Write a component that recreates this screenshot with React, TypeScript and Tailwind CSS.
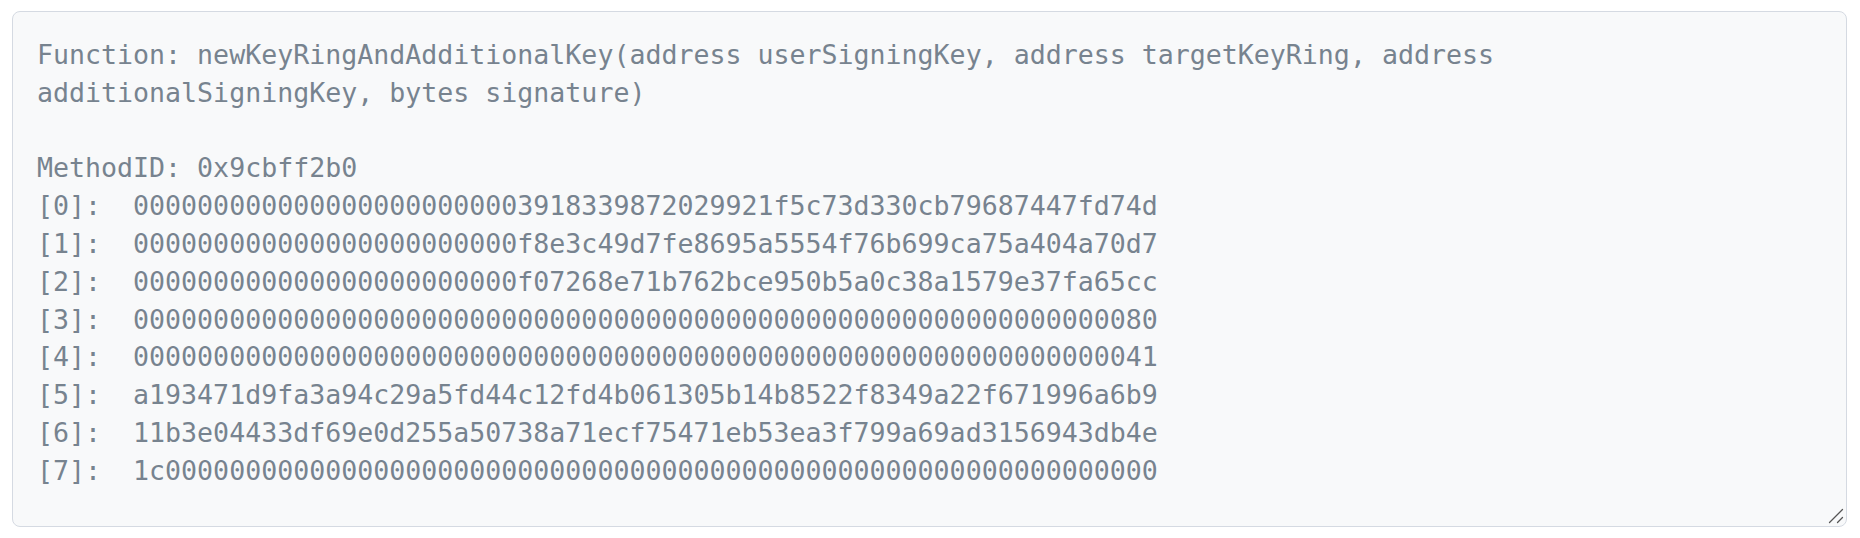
const inputData = [
  "Function: newKeyRingAndAdditionalKey(address userSigningKey, address targetKeyRing, address",
  "additionalSigningKey, bytes signature)",
  "",
  "MethodID: 0x9cbff2b0",
  "[0]:  0000000000000000000000003918339872029921f5c73d330cb79687447fd74d",
  "[1]:  000000000000000000000000f8e3c49d7fe8695a5554f76b699ca75a404a70d7",
  "[2]:  000000000000000000000000f07268e71b762bce950b5a0c38a1579e37fa65cc",
  "[3]:  0000000000000000000000000000000000000000000000000000000000000080",
  "[4]:  0000000000000000000000000000000000000000000000000000000000000041",
  "[5]:  a193471d9fa3a94c29a5fd44c12fd4b061305b14b8522f8349a22f671996a6b9",
  "[6]:  11b3e04433df69e0d255a50738a71ecf75471eb53ea3f799a69ad3156943db4e",
  "[7]:  1c00000000000000000000000000000000000000000000000000000000000000",
].join("\n");

function ResizeGrip() {
  return (
    <svg
      className="absolute right-[3px] bottom-[3px] pointer-events-none"
      width="16"
      height="16"
      viewBox="0 0 16 16"
    >
      <path d="M1.5 14.5L14.5 1.5" stroke="#555" strokeWidth="1.3" strokeLinecap="round" />
      <path d="M9.5 14.5L14.5 9.5" stroke="#555" strokeWidth="1.3" strokeLinecap="round" />
    </svg>
  );
}

export default function App() {
  return (
    <div className="min-h-screen bg-white pt-[11px] pl-3">
      <div className="relative w-[1835px] h-[516px]">
        <textarea
          readOnly
          spellCheck={false}
          defaultValue={inputData}
          className="block w-full h-full rounded-lg border border-[#d5dae2] bg-[#f8f9fa] p-6 text-[26.6px] leading-[37.8px] text-[#77838f] outline-none resize-none"
          style={{ fontFamily: '"DejaVu Sans Mono", "Liberation Mono", monospace' }}
        />
        <ResizeGrip />
      </div>
    </div>
  );
}
